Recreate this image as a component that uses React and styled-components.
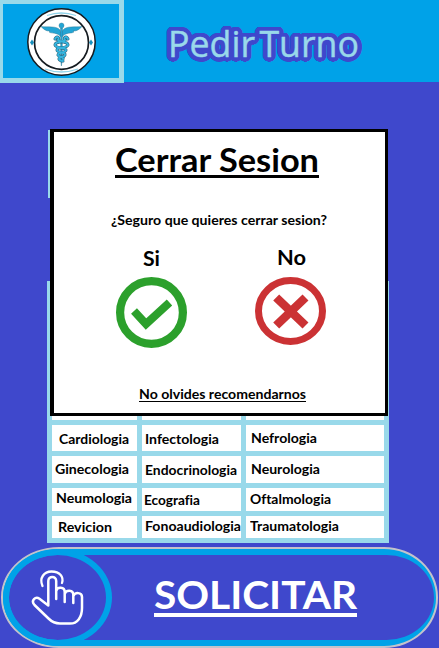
import React, { useLayoutEffect, useRef, useState } from 'react';
import styled, { createGlobalStyle } from 'styled-components';

const blue = '#3f48cc';
const cyan = '#00a2e8';
const pale = '#99d9ea';

const GlobalStyle = createGlobalStyle`
  * { box-sizing: border-box; }
  body { margin: 0; background: ${blue}; font-family: Lato, 'Open Sans', sans-serif; overflow: hidden; }
`;

const Page = styled.div`
  position: relative;
  width: 439px;
  height: 648px;
  overflow: hidden;
  background: ${blue};
  font-variant-ligatures: none;
`;

const Header = styled.header`
  display: flex;
  height: 82px;
  background: ${cyan};
`;

const LogoBox = styled.div`
  width: 124px;
  height: 83px;
  flex: none;
  border: solid ${pale};
  border-width: 4px 5px 5px 3px;
  background: ${cyan};
  svg { display: block; }
`;

const TitleArea = styled.div`
  padding: 26px 0 0 44px;
`;

const Line = styled.div`
  width: ${(p) => p.$width}px;
  height: ${(p) => p.$size}px;
  font-size: ${(p) => p.$size}px;
  line-height: ${(p) => p.$size}px;
  font-weight: ${(p) => p.$weight || 700};
  color: ${(p) => p.$color || '#000'};
  text-align: left;
  white-space: nowrap;
`;

const Glyphs = styled.span`
  display: inline-block;
  vertical-align: top;
  transform-origin: 0 0;
`;

/* One line of text, condensed or widened to an exact width. */
function FitText({ width, size, weight, color, className, children }) {
  const ref = useRef(null);
  const [scale, setScale] = useState(1);
  useLayoutEffect(() => {
    setScale(width / ref.current.getBoundingClientRect().width);
  }, []);
  return (
    <Line className={className} $width={width} $size={size} $weight={weight} $color={color}>
      <Glyphs ref={ref} style={{ transform: `scaleX(${scale})` }}>{children}</Glyphs>
    </Line>
  );
}

/* A ring of shadows gives the lettering a thick, round-cornered outline. */
const outline = Array.from({ length: 24 }, (_, i) => {
  const a = (i * Math.PI) / 12;
  return `${(4.7 * Math.cos(a)).toFixed(2)}px ${(4.5 * Math.sin(a)).toFixed(2)}px 0 ${blue}`;
}).join(', ');

const Title = styled(FitText)`
  font-family: 'Open Sans', 'Noto Sans', sans-serif;
  word-spacing: -5px;
  -webkit-text-stroke: 0.4px ${pale};
  text-shadow: ${outline}, 2px 0 0 ${blue}, -2px 0 0 ${blue}, 0 2px 0 ${blue}, 0 -2px 0 ${blue};
`;

const Main = styled.main`
  height: 461px;
  padding: 48px 0 0 47px;
`;

const Banner = styled.div`
  width: 340px;
  height: 68px;
  margin: 0 0 83px 1px;
  background: linear-gradient(90deg, ${pale} 3px, ${blue} 3px);
`;

const Table = styled.div`
  display: grid;
  width: 342px;
  height: 262px;
  padding: 5px;
  gap: 5px;
  grid-template-columns: 85px 99px 138px;
  grid-template-rows: 134px 26px 27px 23px 22px;
  background: ${pale};
`;

const Cell = styled.div`
  padding: ${(p) => p.$top}px 0 0 ${(p) => p.$left}px;
  background: #fff;
`;

const Dialog = styled.section`
  position: absolute;
  left: 50px;
  top: 129px;
  display: flex;
  flex-direction: column;
  width: 338px;
  height: 287px;
  border: solid #000;
  border-width: 3px 3px 3px 4px;
  background: #fff;
`;

const Heading = styled.div`
  width: 204px;
  height: 35px;
  margin: 11px 0 0 61px;
  border-bottom: 3px solid #000;
`;

const Question = styled.div`
  padding: 36px 0 0 57px;
`;

const Choices = styled.div`
  display: flex;
  gap: 68px;
  height: 101px;
  margin: 19px 0 0 62px;
`;

const Choice = styled.button`
  display: flex;
  flex-direction: column;
  width: 71px;
  padding: ${(p) => p.$top}px 0 0;
  border: 0;
  background: none;
  font-family: inherit;
  svg { display: block; flex: none; margin-top: ${(p) => p.$gap}px; }
`;

const ChoiceName = styled.div`
  padding-left: ${(p) => p.$left}px;
`;

const Reminder = styled.div`
  width: 167px;
  height: 14px;
  margin: 41px 0 0 85px;
  border-bottom: 1px solid #000;
`;

const Request = styled.button`
  display: flex;
  width: 437px;
  height: 101px;
  margin: 4px 0 0 1px;
  padding: 0;
  border: 2px solid #c3c3cb;
  border-radius: 58px 54px 54px 58px / 50px;
  background: ${cyan};
  font-family: inherit;
`;

const RequestInner = styled.div`
  display: flex;
  width: 425px;
  height: 85px;
  margin: 6px 0 0 6px;
  flex: none;
  border-radius: 49px 48px 48px 49px / 43px;
  background: ${blue};
`;

const HandRing = styled.div`
  width: 109px;
  height: 97px;
  flex: none;
  margin: -6px 0 0 -6px;
  border: 6px solid ${cyan};
  border-radius: 50%;
  svg { display: block; }
`;

const RequestName = styled.div`
  width: 203px;
  height: 62px;
  margin-left: 42px;
  padding-top: 20px;
  border-bottom: 4px solid #fff;
`;

const rows = [
  [['Cardiologia', 7, 8, 70], ['Infectologia', 3, 8, 74], ['Nefrologia', 5, 7, 66]],
  [['Ginecologia', 3, 7, 74], ['Endocrinologia', 3, 8, 92], ['Neurologia', 5, 7, 69]],
  [['Neumologia', 4, 4, 76], ['Ecografia', 2, 6, 56], ['Oftalmologia', 4, 5, 81]],
  [['Revicion', 6, 5, 54], ['Fonoaudiologia', 3, 4, 96], ['Traumatologia', 4, 4, 89]],
];

function Caduceus() {
  const snakes =
    'M55 39C57 35 60 38 58 40C62 43 68 41 68 45C67 49 57 46 57 50C57 53 66 52 65 55C64 58 59 56 59 59Q60 61 63 61M68 39C66 35 63 38 65 40C62 43 55 41 55 45C56 49 66 47 66 50C66 53 58 52 58 55C59 57 64 57 63 59';
  return (
    <svg width="116" height="74" viewBox="3 4 116 74">
      <ellipse cx="61.500" cy="42" rx="33.700" ry="33.300" fill="#fff" stroke="#151b20" strokeWidth="1.500" />
      <ellipse cx="61.500" cy="42.500" rx="27" ry="26.800" fill="#fff" stroke="#151b20" strokeWidth="1.700" />
      <path d="M47 15.500Q61 10.500 76 15.500" fill="none" stroke="#8fd3ea" strokeWidth="1.300" />
      <path d="M45 69Q61 75 78 69" fill="none" stroke="#8fd3ea" strokeWidth="1.300" />
      <path d="M32 39.500l2 3-2 3-2-3zM91 39.500l2 3-2 3-2-3z" fill="#168fbd" />
      <g fill="#23a5d5" stroke="#286f8c" strokeWidth=".4">
        <path d="M60.500 36.500C57 32 52 34 49 32L50 31C46 31.500 43.500 29 41 26.500C49 27.500 56 25.500 60 30L61 33L63 30C67 25.500 74 27.500 82 26.500C79.500 29 77 31.500 73 31L74 32C71 34 66 32 62.500 36.500Z" />
        <path d="M60.500 28h2l-.4 33-.7 5-.6-5z" />
        <circle cx="61.500" cy="25.500" r="2.500" />
      </g>
      <g fill="none" strokeLinecap="round">
        <path d={snakes} stroke="#28617a" strokeWidth="3" />
        <path d={snakes} stroke="#35b5df" strokeWidth="1.900" />
      </g>
    </svg>
  );
}

function CheckIcon() {
  return (
    <svg width="71" height="71" viewBox="0 0 71 71">
      <circle cx="35.500" cy="35.500" r="31.400" fill="none" stroke="#2ca02c" strokeWidth="8.200" />
      <path d="M18 34L30 47L53.500 25.500" fill="none" stroke="#2ca02c" strokeWidth="8" />
    </svg>
  );
}

function CrossIcon() {
  return (
    <svg width="71" height="68" viewBox="0 0 71 68">
      <ellipse cx="35.500" cy="34" rx="32" ry="30.500" fill="none" stroke="#cb3234" strokeWidth="7" />
      <path d="M21.200 20.500L50.500 48.500M50.500 20.500L21.200 48.500" fill="none" stroke="#cb3234" strokeWidth="8.600" />
    </svg>
  );
}

function HandIcon() {
  return (
    <svg width="97" height="85" viewBox="9 555 97 85" fill="none" stroke="#fff" strokeWidth="2.500" strokeLinejoin="round" strokeLinecap="round">
      <path d="M42.500 586C39 578 44 571.500 51.500 571.500C60 571.500 64 577 62 583" strokeWidth="2.300" />
      <path d="M48.300 605.500V581C48.300 575.500 56.200 575.500 56.200 581V599M56.200 591C57 586.500 64.700 586.500 64.700 592V602M64.700 594C66 589.500 73.300 589.500 73.300 595V603M73.300 596C75 592 82 592 82 597V608C82 617 77.500 623.500 70 623.500H60C55 623.500 51.500 621.500 48.500 618.500L34.500 605C30.500 600.500 35.500 596 39.500 598.800L48.300 605.500" />
    </svg>
  );
}

export default function App() {
  return (
    <Page>
      <GlobalStyle />
      <Header>
        <LogoBox><Caduceus /></LogoBox>
        <TitleArea>
          <Title width={191} size={36} weight={400} color={pale}>Pedir Turno</Title>
        </TitleArea>
      </Header>
      <Main>
        <Banner />
        <Table>
          <Cell /><Cell /><Cell />
          {rows.flat().map(([name, left, top, width]) => (
            <Cell key={name} $left={left} $top={top}>
              <FitText width={width} size={13}>{name}</FitText>
            </Cell>
          ))}
        </Table>
      </Main>
      <Request>
        <RequestInner>
          <HandRing><HandIcon /></HandRing>
          <RequestName>
            <FitText width={203} size={38} weight={700} color="#fff">SOLICITAR</FitText>
          </RequestName>
        </RequestInner>
      </Request>
      <Dialog>
        <Heading><FitText width={204} size={33}>Cerrar Sesion</FitText></Heading>
        <Question><FitText width={216} size={13}>¿Seguro que quieres cerrar sesion?</FitText></Question>
        <Choices>
          <Choice $top={2} $gap={9}>
            <ChoiceName $left={27}><FitText width={17} size={20}>Si</FitText></ChoiceName>
            <CheckIcon />
          </Choice>
          <Choice $top={1} $gap={10}>
            <ChoiceName $left={22}><FitText width={29} size={20}>No</FitText></ChoiceName>
            <CrossIcon />
          </Choice>
        </Choices>
        <Reminder><FitText width={167} size={13}>No olvides recomendarnos</FitText></Reminder>
      </Dialog>
    </Page>
  );
}
